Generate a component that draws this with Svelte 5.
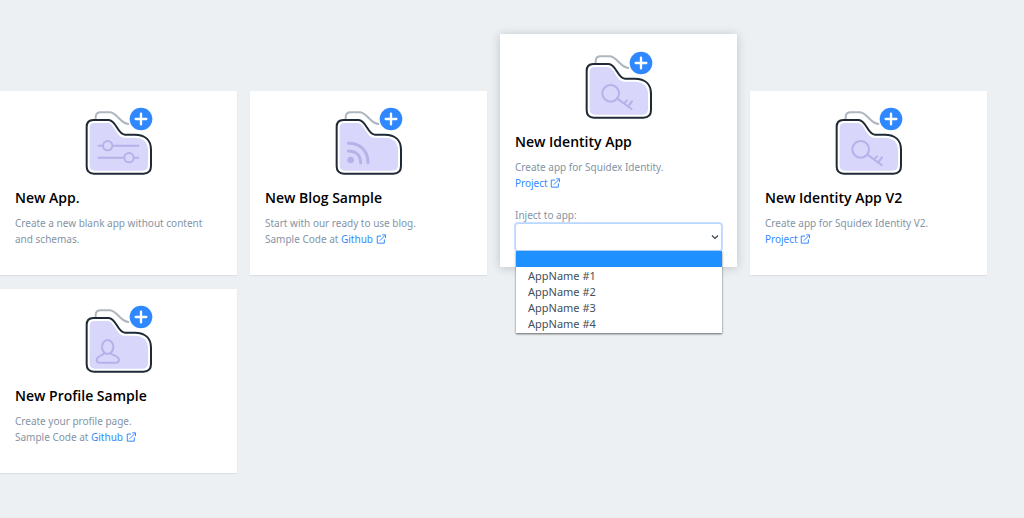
<script lang="ts">
	type Template = {
		id: string;
		title: string;
		icon: 'sliders' | 'feed' | 'key' | 'person';
		lines: string[];
		linkPrefix?: string;
		link?: string;
		active?: boolean;
	};

	const templates: Template[] = [
		{
			id: 'blank',
			title: 'New App.',
			icon: 'sliders',
			lines: ['Create a new blank app without content and schemas.']
		},
		{
			id: 'blog',
			title: 'New Blog Sample',
			icon: 'feed',
			lines: ['Start with our ready to use blog.'],
			linkPrefix: 'Sample Code at ',
			link: 'Github'
		},
		{
			id: 'identity',
			title: 'New Identity App',
			icon: 'key',
			lines: ['Create app for Squidex Identity.'],
			link: 'Project',
			active: true
		},
		{
			id: 'identity-v2',
			title: 'New Identity App V2',
			icon: 'key',
			lines: ['Create app for Squidex Identity V2.'],
			link: 'Project'
		},
		{
			id: 'profile',
			title: 'New Profile Sample',
			icon: 'person',
			lines: ['Create your profile page.'],
			linkPrefix: 'Sample Code at ',
			link: 'Github'
		}
	];

	const apps = ['', 'AppName #1', 'AppName #2', 'AppName #3', 'AppName #4'];

	let selected = $state('');
	let open = $state(true);

	function choose(app: string) {
		selected = app;
		open = false;
	}
</script>

<main class="templates">
	{#each templates as template (template.id)}
		<article class="card" class:card-active={template.active}>
			<svg class="card-icon" viewBox="45 36 204 204" fill="none" aria-hidden="true">
				<path
					d="M77 74V66Q77 52 92 52H118C142 52 148 84 175 87"
					stroke="#aeb7bf"
					stroke-width="6"
					stroke-linecap="round"
				/>
				<path
					d="M70 75H116C139 75 142 119 165 119H194C226 119 243 136 243 164V213Q243 236 220 236H72Q50 236 50 214V96Q50 75 70 75Z"
					fill="#fff"
					stroke="#1f2a36"
					stroke-width="6"
				/>
				<path
					d="M75 84H114C133 85 139 128 163 128H193C220 128 234 142 234 165V210Q234 227 217 227H75Q59 227 59 211V99Q59 84 75 84Z"
					fill="#d8d6fa"
				/>
				<g stroke="#b6b1e9" stroke-width="6" stroke-linecap="round" stroke-linejoin="round">
					{#if template.icon === 'sliders'}
						<path d="M86 152H98M129 152H205M86 188H161M193 188H205" />
						<circle cx="113" cy="152" r="14" />
						<circle cx="177" cy="188" r="14" />
					{:else if template.icon === 'feed'}
						<circle cx="92" cy="195" r="7" fill="#b6b1e9" />
						<path d="M85 168C109 168 122 182 122 203M85 145C123 145 144 169 144 203" stroke-width="9" />
					{:else if template.icon === 'key'}
						<circle cx="122" cy="163" r="25" />
						<path d="M142 179L185 210M162 193L171 184M175 202L186 187" />
					{:else}
						<ellipse cx="113" cy="162" rx="17" ry="21" />
						<path d="M103 181C99 188 80 188 80 201Q80 209 90 209H137Q147 209 147 201C147 188 126 188 122 181" />
					{/if}
				</g>
				<circle cx="213" cy="72" r="34" fill="#2f88ff" />
				<path d="M213 56V88M197 72H229" stroke="#fff" stroke-width="7" stroke-linecap="round" />
			</svg>

			<h2>{template.title}</h2>

			<div class="description">
				{#each template.lines as line}
					<p>{line}</p>
				{/each}
				{#if template.link}
					<p>
						{template.linkPrefix ?? ''}<a href="#{template.id}"
							>{template.link}
							<svg class="external" viewBox="0 0 12 12" fill="none" stroke="currentColor" aria-hidden="true">
								<path d="M6 2.5H1.5V11H10V6.5M4.5 8L11 1.5M7.5 1H11.5V5" stroke-width="1.2" />
							</svg></a
						>
					</p>
				{/if}
			</div>

			{#if template.active}
				<div class="inject">
					<label for="inject-app">Inject to app:</label>
					<select
						id="inject-app"
						bind:value={selected}
						onmousedown={(e) => {
							e.preventDefault();
							open = !open;
						}}
					>
						{#each apps as app}
							<option value={app}>{app}</option>
						{/each}
					</select>
					<svg class="chevron" viewBox="0 0 8 6" fill="none" aria-hidden="true">
						<path d="M1 1.5L4 4.5L7 1.5" stroke="#333f4a" stroke-width="1.2" />
					</svg>

					{#if open}
						<div class="menu" role="listbox" aria-label="Inject to app">
							{#each apps as app}
								<button
									type="button"
									role="option"
									aria-selected={app === selected}
									aria-label={app || 'None'}
									onclick={() => choose(app)}>{app}</button
								>
							{/each}
						</div>
					{/if}
				</div>
			{/if}
		</article>
	{/each}
</main>

<style>
	:global(body) {
		margin: 0;
		background: #ecf0f3;
	}

	.templates {
		display: grid;
		grid-template-columns: repeat(4, minmax(0, 1fr));
		align-items: end;
		gap: 14px 13px;
		padding: 34px 37px 44px 0;
		font-family: 'Noto Sans', 'Open Sans', sans-serif;
		font-size: 10px;
		line-height: 16px;
		color: #8494a5;
	}

	.card {
		box-sizing: border-box;
		min-height: 184px;
		padding: 16px 15px;
		background: #fff;
		box-shadow: 0 1px 1px #dce0e4;
	}

	.card-active {
		margin-bottom: 8px;
		padding-top: 17px;
		box-shadow: 0 1px 9px rgba(40, 50, 60, 0.24);
	}

	.card-icon {
		display: block;
		width: 68px;
		height: 68px;
		margin: 0 auto;
	}

	h2 {
		margin: 13px 0 7px;
		font-family: 'Open Sans', 'Noto Sans', sans-serif;
		font-size: 14px;
		font-weight: 600;
		line-height: 20px;
		color: #000;
	}

	p {
		margin: 0;
	}

	a {
		color: #3389ff;
		text-decoration: none;
	}

	.external {
		width: 10px;
		height: 10px;
		vertical-align: -1px;
	}

	.inject {
		position: relative;
		margin-top: 17px;
	}

	.inject label {
		display: block;
		line-height: 15px;
	}

	select {
		display: block;
		box-sizing: border-box;
		width: 100%;
		height: 28px;
		padding: 0 20px 0 12px;
		appearance: none;
		border: 1px solid #b9d7ff;
		border-radius: 3px;
		outline: none;
		background: #fff;
		box-shadow: 0 0 0 1px #c8dfff;
		font: inherit;
		color: #444f5a;
	}

	.chevron {
		position: absolute;
		right: 3px;
		bottom: 11px;
		width: 8px;
		height: 6px;
		pointer-events: none;
	}

	.menu {
		position: absolute;
		top: 100%;
		left: 1px;
		right: 0;
		padding-bottom: 1px;
		background: #fff;
		box-shadow: 0 1px 2px rgba(0, 0, 0, 0.6);
	}

	.menu button {
		display: block;
		width: 100%;
		height: 16px;
		padding: 0 12px;
		border: 0;
		background: none;
		font: inherit;
		font-size: 11px;
		line-height: 16px;
		text-align: left;
		color: #444f5a;
	}

	.menu button[aria-selected='true'] {
		margin-bottom: 1px;
		background: #1e90ff;
	}
</style>
